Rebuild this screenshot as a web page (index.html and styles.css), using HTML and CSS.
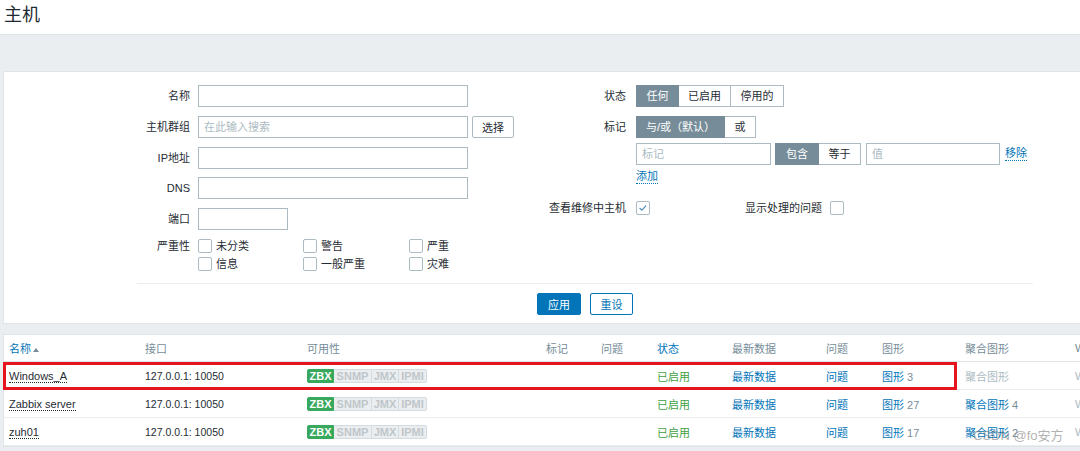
FILE: index.html
```html
<!DOCTYPE html>
<html lang="zh">
<head>
<meta charset="utf-8">
<title>主机</title>
<link rel="stylesheet" href="styles.css">
</head>
<body>
<div class="page">
  <header class="page-header"><h1>主机</h1></header>
  <div class="band"></div>

  <section class="filter">
    <div class="filter-form">
      <div class="col col-left">
        <div class="row"><label class="lbl">名称</label><input class="txt w-long" type="text"></div>
        <div class="row"><label class="lbl">主机群组</label><input class="txt w-long" type="text" placeholder="在此输入搜索"><button class="btn-grey" type="button">选择</button></div>
        <div class="row"><label class="lbl">IP地址</label><input class="txt w-long" type="text"></div>
        <div class="row"><label class="lbl">DNS</label><input class="txt w-long" type="text"></div>
        <div class="row"><label class="lbl">端口</label><input class="txt w-port" type="text"></div>
        <div class="row row-sev"><label class="lbl lbl-sev">严重性</label>
          <div class="sev-grid">
            <span class="cb-item"><span class="cb"></span>未分类</span>
            <span class="cb-item"><span class="cb"></span>警告</span>
            <span class="cb-item"><span class="cb"></span>严重</span>
            <span class="cb-item"><span class="cb"></span>信息</span>
            <span class="cb-item"><span class="cb"></span>一般严重</span>
            <span class="cb-item"><span class="cb"></span>灾难</span>
          </div>
        </div>
      </div>

      <div class="col col-right">
        <div class="row r-status"><label class="lbl lbl-r">状态</label>
          <div class="seg">
            <span class="seg-item on s-any">任何</span><span class="seg-item s-en">已启用</span><span class="seg-item s-dis">停用的</span>
          </div>
        </div>
        <div class="row r-tags"><label class="lbl lbl-r">标记</label>
          <div class="seg">
            <span class="seg-item on s-and">与/或（默认）</span><span class="seg-item s-or">或</span>
          </div>
        </div>
        <div class="row r-tagrow">
          <input class="txt w-tag" type="text" placeholder="标记">
          <div class="seg seg-op">
            <span class="seg-item on s-like">包含</span><span class="seg-item s-eq">等于</span>
          </div>
          <input class="txt w-val" type="text" placeholder="值">
          <a class="dlink" href="#">移除</a>
        </div>
        <div class="row r-add"><a class="dlink" href="#">添加</a></div>
        <div class="row r-maint">
          <label class="lbl lbl-r">查看维修中主机</label>
          <span class="cb checked"><svg viewBox="0 0 14 14" width="12" height="12"><polyline points="3,7 5.6,9.6 10.6,4.2" fill="none" stroke="#4a8cc0" stroke-width="1.3"/></svg></span>
          <label class="lbl-suppr">显示处理的问题</label>
          <span class="cb"></span>
        </div>
      </div>
    </div>
    <div class="filter-sep"></div>
    <div class="filter-buttons">
      <button class="btn-primary" type="button">应用</button>
      <button class="btn-alt" type="button">重设</button>
    </div>
  </section>

  <section class="hosts">
    <table class="host-table">
      <colgroup>
        <col class="c1"><col class="c2"><col class="c3"><col class="c4"><col class="c5"><col class="c6"><col class="c7"><col class="c8"><col class="c9"><col class="c10"><col class="c11">
      </colgroup>
      <thead>
        <tr>
          <th class="sort">名称<span class="arrow"></span></th>
          <th>接口</th>
          <th>可用性</th>
          <th>标记</th>
          <th>问题</th>
          <th class="sort">状态</th>
          <th>最新数据</th>
          <th>问题</th>
          <th>图形</th>
          <th>聚合图形</th>
          <th>Web</th>
        </tr>
      </thead>
      <tbody>
        <tr>
          <td><a class="host-link" href="#">Windows_A</a></td>
          <td class="ip">127.0.0.1: 10050</td>
          <td><span class="avail"><span class="badge b-zbx">ZBX</span><span class="badge b-grey b-snmp">SNMP</span><span class="badge b-grey b-jmx">JMX</span><span class="badge b-grey b-ipmi">IPMI</span></span></td>
          <td></td>
          <td></td>
          <td class="ok">已启用</td>
          <td><a class="blink" href="#">最新数据</a></td>
          <td><a class="blink" href="#">问题</a></td>
          <td><a class="blink" href="#">图形</a> <span class="cnt">3</span></td>
          <td class="off">聚合图形</td>
          <td class="off">Web</td>
        </tr>
        <tr>
          <td><a class="host-link" href="#">Zabbix server</a></td>
          <td class="ip">127.0.0.1: 10050</td>
          <td><span class="avail"><span class="badge b-zbx">ZBX</span><span class="badge b-grey b-snmp">SNMP</span><span class="badge b-grey b-jmx">JMX</span><span class="badge b-grey b-ipmi">IPMI</span></span></td>
          <td></td>
          <td></td>
          <td class="ok">已启用</td>
          <td><a class="blink" href="#">最新数据</a></td>
          <td><a class="blink" href="#">问题</a></td>
          <td><a class="blink" href="#">图形</a> <span class="cnt">27</span></td>
          <td><a class="blink" href="#">聚合图形</a> <span class="cnt">4</span></td>
          <td class="off">Web</td>
        </tr>
        <tr>
          <td><a class="host-link" href="#">zuh01</a></td>
          <td class="ip">127.0.0.1: 10050</td>
          <td><span class="avail"><span class="badge b-zbx">ZBX</span><span class="badge b-grey b-snmp">SNMP</span><span class="badge b-grey b-jmx">JMX</span><span class="badge b-grey b-ipmi">IPMI</span></span></td>
          <td></td>
          <td></td>
          <td class="ok">已启用</td>
          <td><a class="blink" href="#">最新数据</a></td>
          <td><a class="blink" href="#">问题</a></td>
          <td><a class="blink" href="#">图形</a> <span class="cnt">17</span></td>
          <td><a class="blink" href="#">聚合图形</a> <span class="cnt">2</span></td>
          <td class="off">Web</td>
        </tr>
      </tbody>
    </table>
  </section>
</div>

<div class="highlight"></div>
<div class="watermark">CSDN @fo安方</div>
</body>
</html>
```

FILE: styles.css
```css
* { box-sizing: border-box; }

html, body {
  margin: 0;
  padding: 0;
}

body {
  width: 1080px;
  height: 451px;
  overflow: hidden;
  position: relative;
  background: #ebeef0;
  font-family: "Liberation Sans", "Noto Sans CJK SC", sans-serif;
  font-size: 11px;
  color: #1f2c33;
}

.page {
  width: 1170px;
}

/* header */
.page-header {
  height: 35px;
  background: #fff;
  border-bottom: 1px solid #dfe4e7;
  padding: 1px 0 0 4px;
}

.page-header h1 {
  margin: 0;
  font-family: "Noto Sans CJK SC", sans-serif;
  font-weight: 400;
  font-size: 18px;
  line-height: 24px;
  color: #1f2c33;
}

.band {
  height: 36px;
}

/* filter panel */
.filter {
  margin: 0 3px;
  height: 253px;
  background: #fff;
  border: 1px solid #dfe4e7;
  padding-top: 13px;
}

.filter-form {
  width: 896px;
  height: 198px;
  margin: 0 auto;
  display: flex;
}

.col-left {
  width: 408px;
  flex: none;
}

.col-right {
  flex: 1;
}

.row {
  display: flex;
  align-items: center;
  height: 22px;
  margin-bottom: 8.8px;
}

.lbl {
  flex: none;
  width: 53px;
  margin-right: 8px;
  text-align: right;
  white-space: nowrap;
  line-height: 22px;
}

.lbl-r {
  width: 81px;
  margin-right: 10px;
}

.txt {
  height: 22px;
  border: 1px solid #acbbc2;
  background: #fff;
  padding: 0 5px;
  font: inherit;
  color: #1f2c33;
  outline: none;
  margin: 0;
  border-radius: 0;
}

.txt::placeholder {
  color: #acbbc2;
}

.w-long { width: 270px; }
.w-port { width: 90px; }
.w-tag { width: 135px; margin-left: 91px; margin-right: 4px; }
.w-val { width: 134px; margin-left: 5px; margin-right: 5px; }

.btn-grey {
  height: 22px;
  width: 42px;
  margin-left: 4px;
  background: #fff;
  border: 1px solid #acbbc2;
  border-radius: 2px;
  font: inherit;
  color: #1f2c33;
  padding: 0;
}

/* severity */
.row-sev {
  height: auto;
  align-items: flex-start;
  margin-top: 2.5px;
}

.lbl-sev {
  line-height: 14px;
}

.sev-grid {
  display: grid;
  grid-template-columns: 105px 106px 100px;
  row-gap: 3.6px;
}

.cb-item {
  display: flex;
  align-items: center;
  height: 14px;
  line-height: 14px;
  white-space: nowrap;
}

.cb {
  flex: none;
  display: inline-flex;
  align-items: center;
  justify-content: center;
  width: 14px;
  height: 14px;
  border: 1px solid #acbbc2;
  border-radius: 2px;
  background: #fff;
  margin-right: 4px;
}

/* segmented radio */
.seg {
  display: flex;
}

.seg-item {
  height: 22px;
  line-height: 20px;
  border: 1px solid #acbbc2;
  background: #fff;
  color: #1f2c33;
  text-align: center;
  white-space: nowrap;
}

.seg-item + .seg-item {
  border-left: none;
}

.seg-item.on {
  background: #768d99;
  border-color: #768d99;
  color: #fff;
}

.s-any { width: 43px; }
.s-en { width: 52px; }
.s-dis { width: 53px; }
.s-and { width: 89px; }
.s-or { width: 31px; }
.s-like { width: 44px; }
.s-eq { width: 42px; }

.r-status { margin-bottom: 9px; }
.r-tags { margin-bottom: 5px; }
.r-tagrow { margin-bottom: 5px; }

.dlink {
  display: inline-block;
  line-height: 13px;
  color: #0275b8;
  text-decoration: none;
  border-bottom: 1px dotted #0275b8;
}

.r-add {
  height: 14px;
  padding-left: 91px;
  margin-bottom: 17px;
}

.r-maint {
  height: 14px;
}

.r-maint .lbl {
  line-height: 14px;
}

.r-maint .cb {
  margin-right: 0;
}

.lbl-suppr {
  width: 76px;
  margin-left: 95px;
  margin-right: 9px;
  white-space: nowrap;
  line-height: 14px;
}

.filter-sep {
  width: 896px;
  height: 1px;
  margin: 0 auto;
  background: #ebeef0;
}

.filter-buttons {
  display: flex;
  justify-content: center;
  gap: 9px;
  margin-top: 9px;
}

.btn-primary,
.btn-alt {
  height: 22px;
  padding: 0;
  border-radius: 2px;
  font: inherit;
}

.btn-primary {
  width: 44px;
  background: #0275b8;
  border: 1px solid #0275b8;
  color: #fff;
}

.btn-alt {
  width: 43px;
  background: #fff;
  border: 1px solid #0275b8;
  color: #0275b8;
}

/* hosts table */
.hosts {
  margin: 10px 3px 0;
  background: #fff;
  border: 1px solid #dfe4e7;
}

.host-table {
  width: 100%;
  table-layout: fixed;
  border-spacing: 0;
}

.c1 { width: 136px; }
.c2 { width: 162px; }
.c3 { width: 239px; }
.c4 { width: 55px; }
.c5 { width: 56px; }
.c6 { width: 75px; }
.c7 { width: 94px; }
.c8 { width: 56px; }
.c9 { width: 83px; }
.c10 { width: 110px; }
.c11 { width: 96px; }

.host-table th,
.host-table td {
  padding: 0 5px;
  text-align: left;
  white-space: nowrap;
  overflow: hidden;
  vertical-align: middle;
}

.host-table th {
  height: 27px;
  font-weight: 400;
  color: #768d99;
  border-bottom: 1px solid #dfe4e7;
}

.host-table th.sort {
  color: #0275b8;
}

.arrow {
  display: inline-block;
  width: 0;
  height: 0;
  margin-left: 2px;
  border-left: 3px solid transparent;
  border-right: 3px solid transparent;
  border-bottom: 4px solid #768d99;
  vertical-align: 1px;
}

.host-table td {
  height: 28px;
  border-bottom: 1px solid #ebeef0;
}

.host-link {
  color: #1f2c33;
  text-decoration: none;
  border-bottom: 1px dotted #1f2c33;
}

.ip {
  font-size: 10.5px;
}

.avail {
  display: inline-flex;
  vertical-align: middle;
}

.badge {
  height: 14px;
  line-height: 12px;
  font-size: 11px;
  font-weight: 700;
  text-align: center;
  border: 1px solid;
}

.b-zbx {
  width: 27px;
  background: #38a85d;
  border-color: #38a85d;
  color: #fff;
  border-radius: 2px 0 0 2px;
}

.b-grey {
  background: #ebeef0;
  border-color: #d3dbdf;
  color: #bfc6ca;
  border-left-width: 0;
}

.b-snmp { width: 38px; }
.b-jmx { width: 28px; border-left-width: 1px; margin-left: -1px; }
.b-ipmi { width: 29px; border-left-width: 1px; margin-left: -1px; border-radius: 0 2px 2px 0; }

.ok {
  color: #3f9f45;
}

.blink {
  color: #0275b8;
  text-decoration: none;
}

.cnt {
  color: #768d99;
}

.off {
  color: #acbbc2;
}

/* annotation overlays */
.highlight {
  position: absolute;
  left: 3px;
  top: 362px;
  width: 954px;
  height: 28px;
  border: 3px solid #e5141e;
}

.watermark {
  position: absolute;
  left: 973px;
  top: 428px;
  font-size: 13px;
  line-height: 16px;
  color: rgba(110, 110, 110, 0.55);
  white-space: nowrap;
}
```
